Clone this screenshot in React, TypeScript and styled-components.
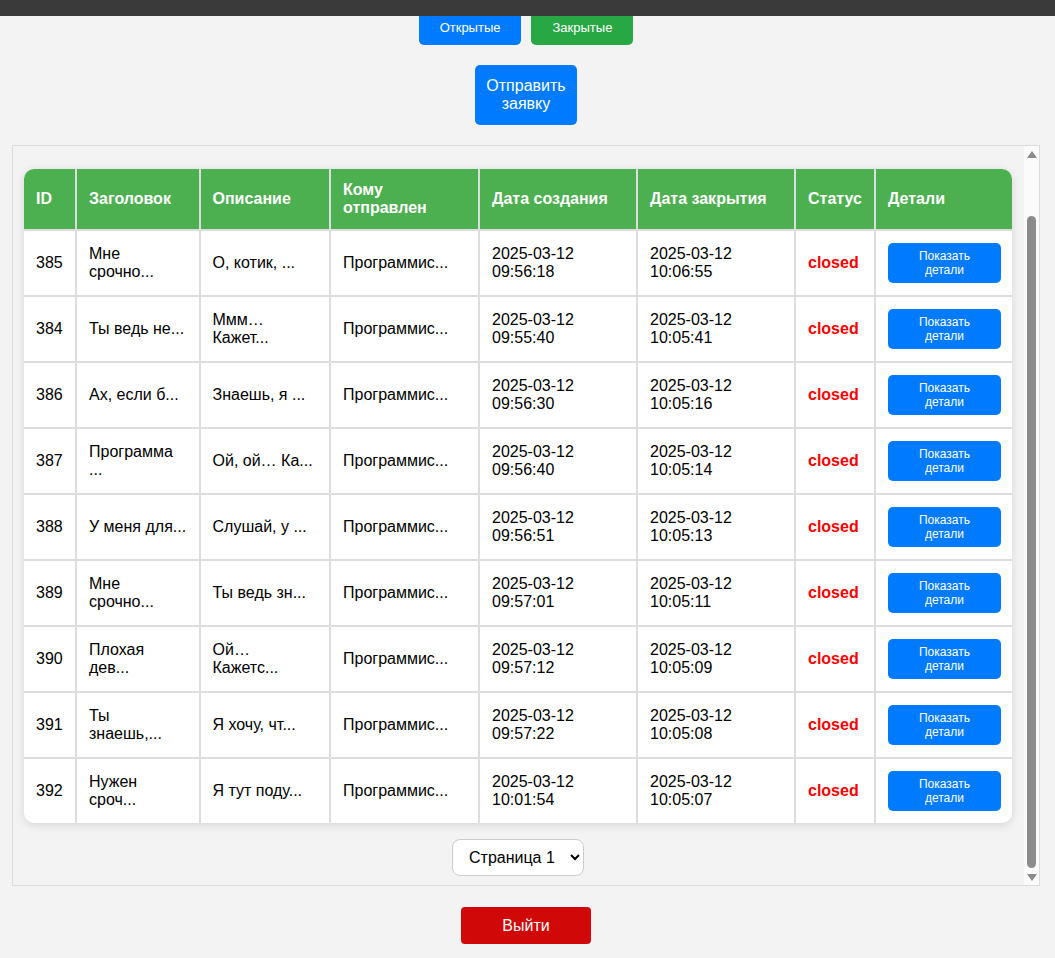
import React from "react";
import styled, { createGlobalStyle } from "styled-components";

const GlobalStyle = createGlobalStyle`
  html, body { margin: 0; padding: 0; background: #f3f3f3; }
  body { font-family: "Liberation Sans", Arial, sans-serif; color: #000; }
`;

const TopBar = styled.div`
  position: fixed;
  top: 0;
  left: 0;
  right: 0;
  height: 16px;
  background: #3a3a3a;
  z-index: 10;
`;

const Page = styled.div`
  display: flex;
  flex-direction: column;
  align-items: center;
  padding: 10px 15px 14px 12px;
`;

const Filters = styled.div`
  display: flex;
  gap: 10px;
`;

const FilterButton = styled.button<{ $color: string }>`
  font-family: "Liberation Sans", Arial, sans-serif;
  font-size: 13px;
  line-height: 15px;
  color: #fff;
  background: ${(p) => p.$color};
  border: none;
  border-radius: 5px;
  padding: 10px 21px;
  cursor: pointer;
`;

const SubmitButton = styled.button`
  margin-top: 20px;
  width: 102px;
  font-family: "Liberation Sans", Arial, sans-serif;
  font-size: 16px;
  line-height: 18px;
  color: #fff;
  background: #007bff;
  border: none;
  border-radius: 5px;
  padding: 12px 8px;
  cursor: pointer;
`;

const ScrollFrame = styled.div`
  margin-top: 20px;
  align-self: stretch;
  height: 739px;
  border: 1px solid #dcdcdc;
  position: relative;
  display: flex;
`;

const ScrollBox = styled.div`
  flex: 1;
  overflow: hidden;
  padding: 23px 12px 9px 11px;
  display: flex;
  flex-direction: column;
  align-items: center;
`;

const Scrollbar = styled.div`
  flex: none;
  width: 15px;
  background: #fbfbfb;
  display: flex;
  flex-direction: column;
  align-items: center;
  padding: 5px 0 4px;
  box-sizing: border-box;
`;

const Arrow = styled.div<{ $down?: boolean }>`
  width: 0;
  height: 0;
  border-left: 5px solid transparent;
  border-right: 5px solid transparent;
  ${(p) =>
    p.$down
      ? "border-top: 7px solid #8a8a8a;"
      : "border-bottom: 7px solid #8a8a8a;"}
`;

const Track = styled.div`
  flex: 1;
  align-self: stretch;
  display: flex;
  flex-direction: column;
  align-items: center;
  padding: 58px 0 6px;
`;

const Thumb = styled.div`
  flex: 1;
  width: 9px;
  border-radius: 5px;
  background: #8c8c8c;
`;

const TableCard = styled.div`
  align-self: stretch;
  background: #fff;
  border-radius: 10px;
  overflow: hidden;
  box-shadow: 0 2px 10px rgba(0, 0, 0, 0.12);
  flex: none;
`;

const Table = styled.table`
  width: 100%;
  border-collapse: separate;
  border-spacing: 0;
  table-layout: fixed;
`;

const Th = styled.th`
  background: #4caf50;
  color: #fff;
  font-size: 16px;
  line-height: 18px;
  font-weight: bold;
  text-align: left;
  padding: 12px;
  & + & { border-left: 2px solid #ddd; }
`;

const Td = styled.td`
  font-size: 16px;
  line-height: 18px;
  padding: 12px;
  height: 64px;
  box-sizing: border-box;
  vertical-align: middle;
  border-top: 2px solid #ddd;
  word-wrap: break-word;
  & + & { border-left: 2px solid #ddd; }
`;

const Status = styled.span`
  color: #f00;
  font-weight: bold;
`;

const DetailsButton = styled.button`
  display: block;
  width: 100%;
  font-family: "Liberation Sans", Arial, sans-serif;
  font-size: 12px;
  line-height: 14px;
  color: #fff;
  background: #007bff;
  border: none;
  border-radius: 5px;
  padding: 6px 12px;
  cursor: pointer;
`;

const PageSelect = styled.select`
  flex: none;
  margin-top: 16px;
  width: 132px;
  height: 37px;
  font-family: "Liberation Sans", Arial, sans-serif;
  font-size: 16px;
  color: #000;
  background: #fff;
  border: 1px solid #ccc;
  border-radius: 8px;
  padding: 0 10px 0 12px;
`;

const LogoutButton = styled.button`
  margin-top: 21px;
  width: 130px;
  height: 37px;
  font-family: "Liberation Sans", Arial, sans-serif;
  font-size: 16px;
  color: #fff;
  background: #d10808;
  border: none;
  border-radius: 4px;
  cursor: pointer;
`;

const columns = [
  { title: "ID", width: 51 },
  { title: "Заголовок", width: 123.5 },
  { title: "Описание", width: 130.5 },
  { title: "Кому отправлен", width: 149 },
  { title: "Дата создания", width: 158 },
  { title: "Дата закрытия", width: 158 },
  { title: "Статус", width: 80 },
  { title: "Детали", width: 139 },
];

const rows = [
  ["385", "Мне срочно...", "О, котик, ...", "2025-03-12 09:56:18", "2025-03-12 10:06:55"],
  ["384", "Ты ведь не...", "Ммм… Кажет...", "2025-03-12 09:55:40", "2025-03-12 10:05:41"],
  ["386", "Ах, если б...", "Знаешь, я ...", "2025-03-12 09:56:30", "2025-03-12 10:05:16"],
  ["387", "Программа ...", "Ой, ой… Ка...", "2025-03-12 09:56:40", "2025-03-12 10:05:14"],
  ["388", "У меня для...", "Слушай, у ...", "2025-03-12 09:56:51", "2025-03-12 10:05:13"],
  ["389", "Мне срочно...", "Ты ведь зн...", "2025-03-12 09:57:01", "2025-03-12 10:05:11"],
  ["390", "Плохая дев...", "Ой… Кажетс...", "2025-03-12 09:57:12", "2025-03-12 10:05:09"],
  ["391", "Ты знаешь,...", "Я хочу, чт...", "2025-03-12 09:57:22", "2025-03-12 10:05:08"],
  ["392", "Нужен сроч...", "Я тут поду...", "2025-03-12 10:01:54", "2025-03-12 10:05:07"],
];

export default function App() {
  return (
    <>
      <GlobalStyle />
      <TopBar />
      <Page>
        <Filters>
          <FilterButton $color="#007bff">Открытые</FilterButton>
          <FilterButton $color="#28a745">Закрытые</FilterButton>
        </Filters>
        <SubmitButton>Отправить заявку</SubmitButton>
        <ScrollFrame>
          <ScrollBox>
            <TableCard>
              <Table>
                <colgroup>
                  {columns.map((c) => (
                    <col key={c.title} style={{ width: c.width }} />
                  ))}
                </colgroup>
                <thead>
                  <tr>
                    {columns.map((c) => (
                      <Th key={c.title}>{c.title}</Th>
                    ))}
                  </tr>
                </thead>
                <tbody>
                  {rows.map((r) => (
                    <tr key={r[0]}>
                      <Td>{r[0]}</Td>
                      <Td>{r[1]}</Td>
                      <Td>{r[2]}</Td>
                      <Td>Программис...</Td>
                      <Td>{r[3]}</Td>
                      <Td>{r[4]}</Td>
                      <Td>
                        <Status>closed</Status>
                      </Td>
                      <Td>
                        <DetailsButton>Показать детали</DetailsButton>
                      </Td>
                    </tr>
                  ))}
                </tbody>
              </Table>
            </TableCard>
            <PageSelect defaultValue="1">
              <option value="1">Страница 1</option>
            </PageSelect>
          </ScrollBox>
          <Scrollbar aria-hidden="true">
            <Arrow />
            <Track>
              <Thumb />
            </Track>
            <Arrow $down />
          </Scrollbar>
        </ScrollFrame>
        <LogoutButton>Выйти</LogoutButton>
      </Page>
    </>
  );
}
